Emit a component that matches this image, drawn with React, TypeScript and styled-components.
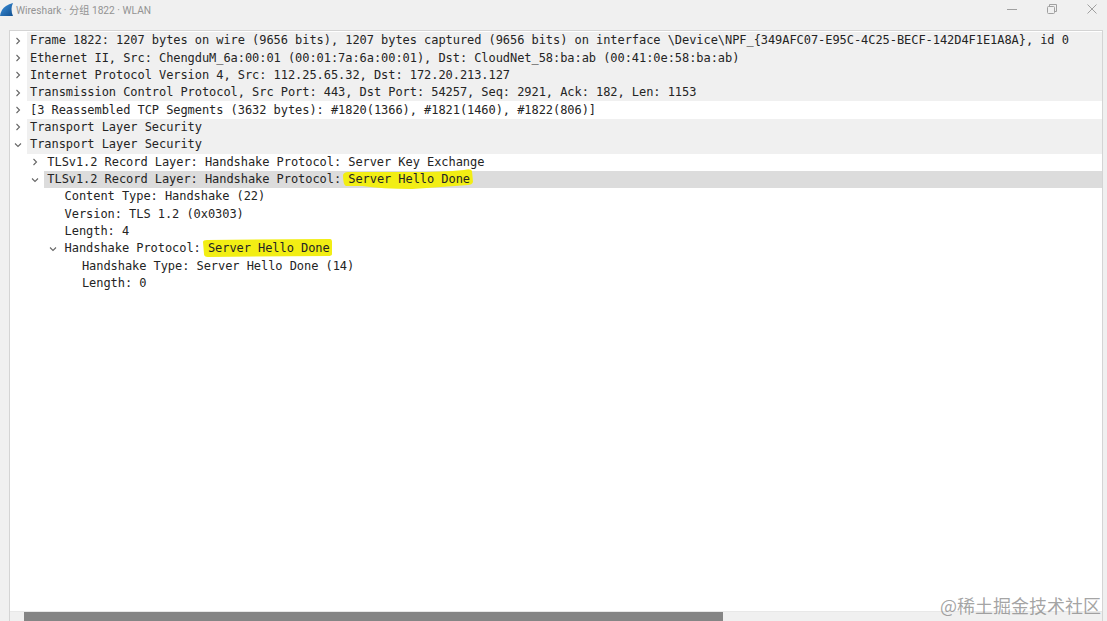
import React from "react";
import styled, { createGlobalStyle } from "styled-components";

const GlobalStyle = createGlobalStyle`
  html, body {
    margin: 0;
    padding: 0;
    background: #f0f0f0;
    overflow: hidden;
  }
`;

const Window = styled.div`
  position: relative;
  width: 1107px;
  height: 621px;
  display: flex;
  flex-direction: column;
  background: #f0f0f0;
  overflow: hidden;
`;

const TitleBar = styled.div`
  height: 30px;
  display: flex;
  align-items: flex-start;
  flex-shrink: 0;
`;

const AppTitle = styled.div`
  margin-top: 3px;
  margin-left: 2px;
  font: 10.2px Roboto, "Noto Sans CJK SC", sans-serif;
  line-height: 15px;
  color: #939393;
`;

const WindowButtons = styled.div`
  margin-left: auto;
  display: flex;
  align-items: center;
  gap: 30px;
  padding: 4px 10px 0 0;
`;

const TreePanel = styled.div`
  flex: 1;
  margin: 0 4px 0 9px;
  padding-top: 1px;
  border: 1px solid #d4d4d4;
  border-bottom: none;
  background: #fff;
  display: flex;
  flex-direction: column;
  min-height: 0;
`;

const Tree = styled.div`
  flex: 1;
`;

const Row = styled.div<{ $depth: number; $tone?: "plain" | "grey" | "selected" }>`
  height: 17.36px;
  display: flex;
  align-items: center;
  padding-left: ${(p) => 4 + p.$depth * 17.3}px;
  background: linear-gradient(
    to right,
    transparent ${(p) => 17 + p.$depth * 17.3}px,
    ${(p) =>
        p.$tone === "grey" ? "#f0f0f0" : p.$tone === "selected" ? "#dcdcdc" : "#fff"}
      ${(p) => 17 + p.$depth * 17.3}px
  );
`;

const Arrow = styled.span`
  width: 16px;
  height: 17px;
  display: flex;
  align-items: center;
  justify-content: flex-start;
  flex-shrink: 0;
`;

const Label = styled.span`
  font: 12px "DejaVu Sans Mono", monospace;
  letter-spacing: -0.06px;
  color: #242424;
  white-space: pre;
  line-height: 17px;
`;

const Marked = styled.span`
  position: relative;
  z-index: 0;
`;

const Marker = styled.svg`
  position: absolute;
  z-index: -1;
  left: -6px;
  top: -4px;
`;

const ScrollTrack = styled.div`
  height: 9px;
  padding-left: 14px;
  background: #f0f0f0;
  border-top: 1px solid #e8e8e8;
  flex-shrink: 0;
`;

const ScrollThumb = styled.div`
  width: 699px;
  height: 9px;
  background: #858585;
`;

const Watermark = styled.div`
  position: absolute;
  right: 6px;
  bottom: 4px;
  font: 18px "Noto Sans CJK SC", sans-serif;
  line-height: 24px;
  color: rgba(125, 125, 125, 0.7);
`;

function Chevron({ open }: { open: boolean }) {
  return (
    <svg width="8" height="8" viewBox="0 0 8 8" fill="none" stroke="#666" strokeWidth="1.1">
      {open ? <path d="M1 2.5 L4 5.5 L7 2.5" /> : <path d="M2.5 1 L5.5 4 L2.5 7" />}
    </svg>
  );
}

const strokes = {
  wavy: "M1 7 Q2 4 6 4 L70 4 Q100 4 122 2 Q129 0 130 3 L131 14 Q130 17 126 17 Q100 19 70 21 Q40 21 20 18 L4 18 Q1 17 1 7 Z",
  flat: "M1 5 Q1 3 5 3 L128 2 Q130 2 130 5 L130 17 Q130 19 126 19 L6 20 Q2 20 2 17 Z",
};

function Highlight({ stroke, children }: { stroke: keyof typeof strokes; children: React.ReactNode }) {
  return (
    <Marked>
      <Marker width="132" height="24" viewBox="0 0 132 24">
        <path d={strokes[stroke]} fill="#f2ee14" />
      </Marker>
      {children}
    </Marked>
  );
}

type Item = {
  depth: number;
  arrow?: "open" | "closed";
  tone?: "plain" | "grey" | "selected";
  text: string;
  mark?: keyof typeof strokes;
};

const items: Item[] = [
  { depth: 0, arrow: "closed", tone: "grey", text: "Frame 1822: 1207 bytes on wire (9656 bits), 1207 bytes captured (9656 bits) on interface \\Device\\NPF_{349AFC07-E95C-4C25-BECF-142D4F1E1A8A}, id 0" },
  { depth: 0, arrow: "closed", tone: "grey", text: "Ethernet II, Src: ChengduM_6a:00:01 (00:01:7a:6a:00:01), Dst: CloudNet_58:ba:ab (00:41:0e:58:ba:ab)" },
  { depth: 0, arrow: "closed", tone: "grey", text: "Internet Protocol Version 4, Src: 112.25.65.32, Dst: 172.20.213.127" },
  { depth: 0, arrow: "closed", tone: "grey", text: "Transmission Control Protocol, Src Port: 443, Dst Port: 54257, Seq: 2921, Ack: 182, Len: 1153" },
  { depth: 0, arrow: "closed", tone: "plain", text: "[3 Reassembled TCP Segments (3632 bytes): #1820(1366), #1821(1460), #1822(806)]" },
  { depth: 0, arrow: "closed", tone: "grey", text: "Transport Layer Security" },
  { depth: 0, arrow: "open", tone: "grey", text: "Transport Layer Security" },
  { depth: 1, arrow: "closed", text: "TLSv1.2 Record Layer: Handshake Protocol: Server Key Exchange" },
  { depth: 1, arrow: "open", tone: "selected", text: "TLSv1.2 Record Layer: Handshake Protocol: ", mark: "wavy" },
  { depth: 2, text: "Content Type: Handshake (22)" },
  { depth: 2, text: "Version: TLS 1.2 (0x0303)" },
  { depth: 2, text: "Length: 4" },
  { depth: 2, arrow: "open", text: "Handshake Protocol: ", mark: "flat" },
  { depth: 3, text: "Handshake Type: Server Hello Done (14)" },
  { depth: 3, text: "Length: 0" },
];

export default function App() {
  return (
    <Window>
      <GlobalStyle />
      <TitleBar>
        <svg width="14" height="17" viewBox="0 0 14 17" style={{ flexShrink: 0 }}>
          <defs>
            <linearGradient id="fin" x1="0" y1="0" x2="1" y2="1">
              <stop offset="0" stopColor="#3d93e0" />
              <stop offset="1" stopColor="#12508f" />
            </linearGradient>
          </defs>
          <path d="M0 16 Q1 9 6 6 Q9 4 13 3 Q10 9 13 16 Z" fill="url(#fin)" />
        </svg>
        <AppTitle>Wireshark · 分组 1822 · WLAN</AppTitle>
        <WindowButtons>
          <svg width="10" height="10" viewBox="0 0 10 10" fill="none" stroke="#a0a0a0" strokeWidth="1">
            <path d="M0 5.5 H10" />
          </svg>
          <svg width="10" height="10" viewBox="0 0 10 10" fill="none" stroke="#a0a0a0" strokeWidth="1">
            <rect x="0.5" y="2.5" width="7" height="7" rx="1" />
            <path d="M2.5 2.5 V0.5 H9.5 V7.5 H7.5" />
          </svg>
          <svg width="10" height="10" viewBox="0 0 10 10" fill="none" stroke="#a0a0a0" strokeWidth="1">
            <path d="M0.5 0.5 L9.5 9.5 M9.5 0.5 L0.5 9.5" />
          </svg>
        </WindowButtons>
      </TitleBar>
      <TreePanel>
        <Tree>
          {items.map((item, i) => (
            <Row key={i} $depth={item.depth} $tone={item.tone}>
              <Arrow>{item.arrow && <Chevron open={item.arrow === "open"} />}</Arrow>
              <Label>
                {item.text}
                {item.mark && <Highlight stroke={item.mark}>Server Hello Done</Highlight>}
              </Label>
            </Row>
          ))}
        </Tree>
        <ScrollTrack>
          <ScrollThumb />
        </ScrollTrack>
      </TreePanel>
      <Watermark>@稀土掘金技术社区</Watermark>
    </Window>
  );
}
